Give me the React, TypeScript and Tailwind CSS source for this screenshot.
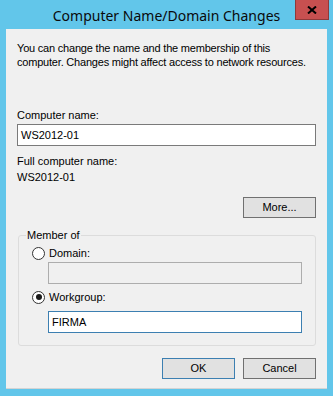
// ComputerNameDialog

const Radio = ({ checked, label }: { checked?: boolean; label: string }) => (
  <div className="flex items-center h-[14px] gap-[4px]">
    <span className="w-[13px] h-[13px] rounded-full border border-[#333333] bg-white flex items-center justify-center">
      {checked && <span className="w-[6px] h-[6px] rounded-full bg-[#1a1a1a]" />}
    </span>
    <span>{label}</span>
  </div>
);

const Button = ({ label, isDefault }: { label: string; isDefault?: boolean }) => (
  <button
    className={
      isDefault
        ? "w-[73px] h-[21px] bg-[#e1e1e1] border border-[#3c7fb1] text-black leading-none"
        : "w-[73px] h-[21px] bg-[#e1e1e1] border border-[#707070] text-black leading-none"
    }
  >
    {label}
  </button>
);

export default function App() {
  return (
    <div className="w-[333px] h-[396px] bg-[#62c6ea] flex flex-col font-['Liberation_Sans',Arial,sans-serif] text-[11px] leading-[14px] text-black">
      {/* title bar */}
      <div className="relative h-[29px] flex items-center justify-center">
        <span className="font-['Noto_Sans',sans-serif] text-[14px] leading-none pt-[2px] text-[#0a0a0a]">
          Computer Name/Domain Changes
        </span>
        <div className="absolute right-[4px] top-0 w-[34px] h-[20px] bg-[#c75050] border border-t-0 border-[#8e3a3a] flex items-center justify-center">
          <svg width="10" height="8" viewBox="0 0 10 8">
            <path d="M1 0.5 L9 7.5 M9 0.5 L1 7.5" stroke="#000" strokeWidth="2" />
          </svg>
        </div>
      </div>

      {/* client area */}
      <div className="mx-[6px] h-[360px] bg-[#f0f0f0] border-b border-[#d4d4d4] px-[11px] pt-[12px] flex flex-col">
        <p className="whitespace-nowrap tracking-[-0.2px]">
          You can change the name and the membership of this
          <br />
          computer. Changes might affect access to network resources.
        </p>

        <span className="mt-[39px]">Computer name:</span>
        <div className="mt-[2px] h-[22px] bg-white border border-[#7a7a7a] flex items-center px-[3px]">
          WS2012-01
        </div>

        <span className="mt-[8px]">Full computer name:</span>
        <span className="mt-[2px]">WS2012-01</span>

        <div className="mt-[13px] flex justify-end">
          <Button label="More..." />
        </div>

        <div className="relative mt-[17px] ml-[1px] h-[111px] border border-[#dcdcdc] rounded-[3px] pl-[13px] pr-[13px] pt-[10px] flex flex-col">
          <span className="absolute -top-[8px] left-[7px] bg-[#f0f0f0] px-[1px]">Member of</span>
          <Radio label="Domain:" />
          <div className="mt-[2px] ml-[16px] h-[22px] bg-[#f0f0f0] border border-[#adadad]" />
          <div className="mt-[6px]">
            <Radio checked label="Workgroup:" />
          </div>
          <div className="mt-[7px] ml-[16px] h-[22px] bg-white border border-[#3c7fb1] flex items-center px-[3px]">
            FIRMA
          </div>
        </div>

        <div className="mt-[12px] flex justify-end gap-[8px]">
          <Button label="OK" isDefault />
          <Button label="Cancel" />
        </div>
      </div>
    </div>
  );
}
